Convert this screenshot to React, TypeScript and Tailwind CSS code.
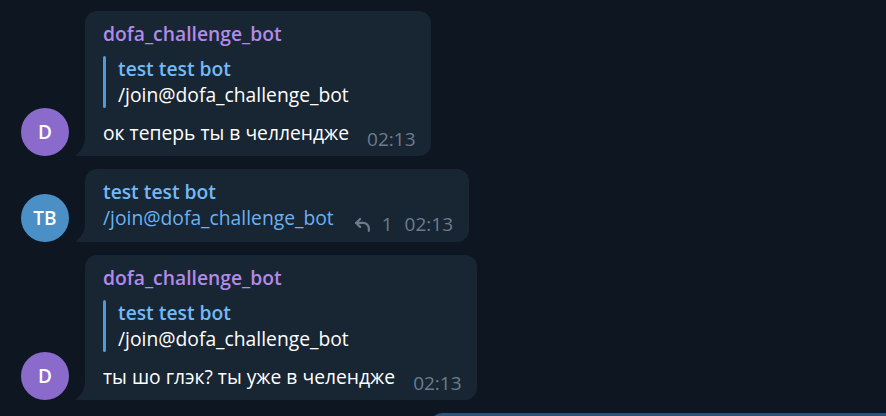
import React from 'react';

const font = { fontFamily: '"Open Sans", "Noto Sans", sans-serif' };

function Tail() {
  return (
    <svg
      className="absolute -left-[9px] bottom-0"
      width="9"
      height="18"
      viewBox="0 0 9 18"
      fill="#182533"
    >
      <path d="M9 0v18H1.5C.4 18 0 17 .9 16.2 6 12 8.6 7 9 0z" />
    </svg>
  );
}

function Avatar({ label, color }: { label: string; color: string }) {
  return (
    <div
      className={`w-12 h-12 rounded-full flex items-center justify-center shrink-0 text-white text-[19px] font-semibold ${color}`}
    >
      {label}
    </div>
  );
}

function Quote() {
  return (
    <div className="flex mt-[9px]">
      <div className="w-[3px] bg-[#4f9bd9] rounded-sm" />
      <div className="pl-3 leading-[26px]">
        <div className="text-[#71baf5] font-semibold">test test bot</div>
        <div className="text-white">/join@dofa_challenge_bot</div>
      </div>
    </div>
  );
}

function BotMessage({ text }: { text: string }) {
  return (
    <div className="flex items-end gap-4 pl-[21px]">
      <Avatar label="D" color="bg-[#8a6bcb]" />
      <div className="relative bg-[#182533] rounded-xl rounded-bl-none pl-[18px] pr-[15px] pt-[10px] pb-[10px]">
        <Tail />
        <div className="text-[#b38ae8] font-semibold leading-[26px]">dofa_challenge_bot</div>
        <Quote />
        <div className="flex items-end mt-3 leading-[26px]">
          <span className="text-white">{text}</span>
          <span className="ml-[18px] text-[19px] text-[#6b7d8c] leading-[22px] -mb-[4px]">02:13</span>
        </div>
      </div>
    </div>
  );
}

export default function App() {
  return (
    <div className="w-[886px] h-[416px] overflow-hidden bg-[#0e1621] text-[19.3px]" style={font}>
      <div className="flex flex-col gap-[13px] pt-[11px]">
        <BotMessage text="ок теперь ты в челлендже" />

        <div className="flex items-end gap-4 pl-[21px]">
          <Avatar label="TB" color="bg-[#4a8fc6]" />
          <div className="relative bg-[#182533] rounded-xl rounded-bl-none pl-[18px] pr-4 pt-[10px] pb-[11px] leading-[26px]">
            <Tail />
            <div className="text-[#71baf5] font-semibold">test test bot</div>
            <div className="flex items-end">
              <span className="text-[#6ab2f2]">/join@dofa_challenge_bot</span>
              <span className="ml-[19px] flex items-center text-[19px] text-[#6b7d8c] leading-[22px] -mb-[4px]">
                <svg
                  width="19"
                  height="19"
                  viewBox="0 0 24 24"
                  fill="none"
                  stroke="currentColor"
                  strokeWidth="2.8"
                  strokeLinecap="round"
                  strokeLinejoin="round"
                >
                  <path d="M9 15 4 10l5-5" />
                  <path d="M20 20v-3a7 7 0 0 0-7-7H4" />
                </svg>
                <span className="ml-[10px]">1</span>
                <span className="ml-[12px]">02:13</span>
              </span>
            </div>
          </div>
        </div>

        <BotMessage text="ты шо глэк? ты уже в челендже" />

        <div className="flex pl-[430px]">
          <div className="w-full h-10 bg-[#2b5278] rounded-tl-xl" />
        </div>
      </div>
    </div>
  );
}
